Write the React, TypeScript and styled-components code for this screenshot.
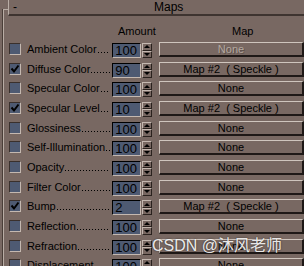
import React from 'react';
import styled, { createGlobalStyle } from 'styled-components';

const GlobalStyle = createGlobalStyle`
  html, body {
    margin: 0;
    padding: 0;
    background: #786862;
  }
  body {
    font-family: 'Liberation Sans', Arial, sans-serif;
    font-size: 11px;
    color: #000;
  }
`;

const maps: MapRow[] = [
  { name: 'Ambient Color', amount: '100', map: 'None', on: false, locked: true },
  { name: 'Diffuse Color', amount: '90', map: 'Map #2  ( Speckle )', on: true },
  { name: 'Specular Color', amount: '100', map: 'None', on: false },
  { name: 'Specular Level', amount: '10', map: 'Map #2  ( Speckle )', on: true },
  { name: 'Glossiness', amount: '100', map: 'None', on: false },
  { name: 'Self-Illumination', amount: '100', map: 'None', on: false },
  { name: 'Opacity', amount: '100', map: 'None', on: false },
  { name: 'Filter Color', amount: '100', map: 'None', on: false },
  { name: 'Bump', amount: '2', map: 'Map #2  ( Speckle )', on: true },
  { name: 'Reflection', amount: '100', map: 'None', on: false },
  { name: 'Refraction', amount: '100', map: 'None', on: false },
  { name: 'Displacement', amount: '100', map: 'None', on: false },
];

const App = () => {
  return (
    <Root>
      <GlobalStyle />
      <Rollout>
        <TitleBar>
          <Dash>-</Dash>
          <Title>Maps</Title>
        </TitleBar>
        <Header>
          <AmountHead>Amount</AmountHead>
          <MapHead>Map</MapHead>
        </Header>
        {maps.map((m) => (
          <Row key={m.name}>
            <Check>
              {m.on && (
                <svg width="10" height="10" viewBox="0 0 10 10">
                  <polyline points="1.5,4.5 4,7.5 8.5,1.5" fill="none" stroke="#000" strokeWidth="2" />
                </svg>
              )}
            </Check>
            <Label>
              <Name>{m.name}</Name>
              <Leader />
            </Label>
            <Amount>{m.amount}</Amount>
            <Spinner>
              <SpinBtn>
                <ArrowUp />
              </SpinBtn>
              <SpinBtn>
                <ArrowDown />
              </SpinBtn>
            </Spinner>
            <MapButton $locked={m.locked}>{m.map}</MapButton>
          </Row>
        ))}
      </Rollout>
      <Watermark>CSDN @沐风老师</Watermark>
    </Root>
  );
};

export default App;

type MapRow = {
  name: string;
  amount: string;
  map: string;
  on: boolean;
  locked?: boolean;
};

const Root = styled.div`
  position: relative;
  width: 304px;
  height: 266px;
  overflow: hidden;
  background: #786862;
`;

const Rollout = styled.div`
  margin-top: 9px;
  margin-left: 3px;
  border-top: 1px solid #b9ada5;
  border-left: 1px solid #b9ada5;
  box-shadow: -1px 0 0 #4a3e38;
`;

const TitleBar = styled.div`
  position: relative;
  margin-top: -10px;
  margin-left: 4px;
  height: 14px;
  display: flex;
  align-items: center;
  background: #786862;
  border-left: 1px solid #b9ada5;
  border-bottom: 2px solid #3e3430;
`;

const Dash = styled.span`
  width: 141px;
  padding-left: 4px;
  font-size: 12px;
  line-height: 12px;
`;

const Title = styled.span`
  font-size: 12px;
  line-height: 12px;
`;

const Header = styled.div`
  display: flex;
  height: 12px;
  padding: 9px 0 4px;
  line-height: 12px;
`;

const AmountHead = styled.span`
  margin-left: 114px;
  width: 114px;
`;

const MapHead = styled.span``;

const Row = styled.div`
  display: flex;
  align-items: flex-start;
  height: 19.67px;
  padding-top: 1px;
  box-sizing: border-box;
  padding-left: 5px;
`;

const Check = styled.div`
  margin-top: 1px;
  width: 12px;
  height: 12px;
  box-sizing: border-box;
  display: flex;
  align-items: center;
  justify-content: center;
  background: #4e5a72;
  border-top: 1px solid #3a302c;
  border-left: 1px solid #3a302c;
  border-bottom: 1px solid #c4b8b0;
  border-right: 1px solid #c4b8b0;
`;

const Label = styled.div`
  margin-left: 6px;
  width: 84px;
  height: 15px;
  display: flex;
  align-items: baseline;
  line-height: 15px;
  white-space: nowrap;
  font-size: 11px;
`;

const Name = styled.span`
  flex: none;
`;

const Leader = styled.span`
  flex: 1;
  align-self: flex-end;
  height: 1px;
  margin: 0 0 4px 1px;
  background: repeating-linear-gradient(to right, #000 0 1px, transparent 1px 3px);
`;

const Amount = styled.div`
  margin-left: 2px;
  margin-top: 1px;
  width: 29px;
  height: 15px;
  box-sizing: border-box;
  background: #4e5a72;
  border-top: 1px solid #000;
  border-left: 1px solid #000;
  border-bottom: 1px solid #c4b8b0;
  border-right: 1px solid #c4b8b0;
  padding-left: 2px;
  font-size: 13px;
  line-height: 13px;
  overflow: hidden;
`;

const Spinner = styled.div`
  margin-left: 1px;
  margin-top: 1px;
  width: 10px;
  height: 15px;
  display: flex;
  flex-direction: column;
`;

const SpinBtn = styled.div`
  flex: 1;
  display: flex;
  align-items: center;
  justify-content: center;
  box-sizing: border-box;
  border-top: 1px solid #c4b8b0;
  border-left: 1px solid #c4b8b0;
  border-bottom: 1px solid #2a221e;
  border-right: 1px solid #2a221e;
`;

const ArrowUp = styled.div`
  width: 0;
  height: 0;
  border-left: 3px solid transparent;
  border-right: 3px solid transparent;
  border-bottom: 3px solid #000;
`;

const ArrowDown = styled(ArrowUp)`
  border-bottom: none;
  border-top: 3px solid #000;
`;

const MapButton = styled.div<{ $locked?: boolean }>`
  margin-left: 7px;
  flex: none;
  width: 145px;
  height: 15px;
  box-sizing: border-box;
  border-top: 1px solid #cfc5bd;
  border-left: 1px solid #cfc5bd;
  border-bottom: 2px solid #1e1816;
  border-right: 2px solid #1e1816;
  text-align: center;
  white-space: pre;
  font-size: 11px;
  line-height: 12px;
  color: ${(p) => (p.$locked ? '#b4a8a0' : '#000')};
  text-shadow: ${(p) => (p.$locked ? '1px 1px 0 #5e504a' : 'none')};
`;

const Watermark = styled.div`
  position: absolute;
  left: 152px;
  top: 236px;
  font-family: 'Liberation Sans', 'Noto Sans CJK SC', sans-serif;
  font-size: 16px;
  line-height: 20px;
  color: rgba(255, 255, 255, 0.9);
  text-shadow: 0 0 2px rgba(0, 0, 0, 0.6);
  white-space: nowrap;
`;
